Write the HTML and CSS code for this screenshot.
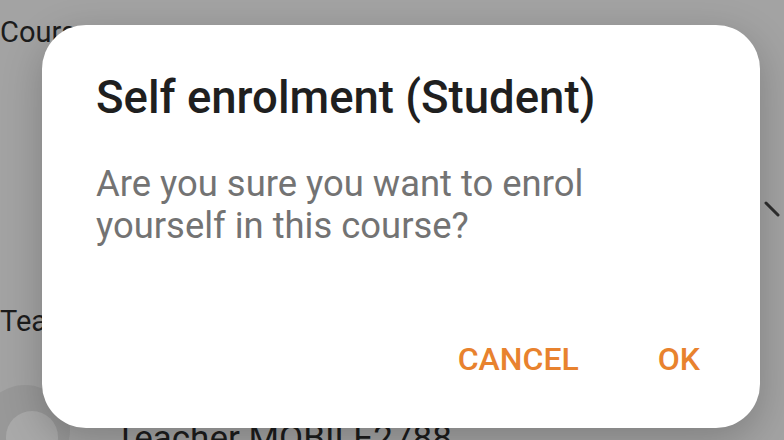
FILE: index.html
```html
<!DOCTYPE html>
<html lang="en">
<head>
    <meta charset="UTF-8">
    <meta name="viewport" content="width=device-width, initial-scale=1.0">
    <title>Self enrolment</title>
    <link rel="stylesheet" href="styles.css">
</head>
<body>
    <div class="page">
        <h2 class="section-title">Course summary</h2>
        <div class="summary-row">
            <svg class="chevron" width="20" height="24" viewBox="0 0 20 24">
                <path d="M2 4 L14 16" stroke="#2e2e2e" stroke-width="3" fill="none" stroke-linecap="round"/>
            </svg>
        </div>
        <h2 class="section-title">Teachers</h2>
        <div class="participant">
            <div class="avatar"><div class="avatar-inner"></div></div>
            <span class="participant-name">Teacher MOBILE2788</span>
        </div>
    </div>

    <div class="dialog">
        <h1 class="dialog-title">Self enrolment (Student)</h1>
        <p class="dialog-text">Are you sure you want to enrol yourself in this course?</p>
        <div class="dialog-actions">
            <button class="dialog-btn">CANCEL</button>
            <button class="dialog-btn">OK</button>
        </div>
    </div>
</body>
</html>
```

FILE: styles.css
```css
html, body {
    margin: 0;
    height: 100%;
    overflow: hidden;
}
body {
    background-color: #a3a3a3;
    font-family: Roboto, "Noto Sans", sans-serif;
    color: #1c1c1c;
}
.page {
    padding-top: 15px;
}
.section-title {
    margin: 0;
    font-size: 29px;
    line-height: 34px;
    font-weight: 400;
}
.summary-row {
    height: 255px;
    padding-top: 150px;
    box-sizing: border-box;
    display: flex;
    justify-content: flex-end;
}
.participant {
    display: flex;
    align-items: flex-start;
    margin-top: 47px;
}
.avatar {
    width: 90px;
    height: 90px;
    border-radius: 50%;
    background-color: #989898;
    margin-left: -20px;
    display: flex;
    align-items: center;
    justify-content: center;
}
.avatar-inner {
    width: 52px;
    height: 52px;
    border-radius: 50%;
    background-color: #a9a9a9;
    margin: 14px 0 0 14px;
}
.participant-name {
    font-size: 35px;
    line-height: 42px;
    padding-top: 33px;
    margin-left: 45px;
}

/* dialog over the page */
.dialog {
    position: absolute;
    left: 42px;
    top: 25px;
    width: 718px;
    height: 403px;
    box-sizing: border-box;
    padding: 47px 60px 49px 54px;
    background-color: #fff;
    border-radius: 44px;
    box-shadow: 0 12px 40px rgba(0, 0, 0, 0.22);
    display: flex;
    flex-direction: column;
}
.dialog-title {
    margin: 0;
    font-size: 45.5px;
    line-height: 52px;
    font-weight: 500;
    color: #1f1f1f;
}
.dialog-text {
    margin: 39px 0 0;
    font-size: 36.4px;
    line-height: 42px;
    color: #737373;
    max-width: 520px;
}
.dialog-actions {
    margin-top: auto;
    display: flex;
    justify-content: flex-end;
    gap: 79px;
}
.dialog-btn {
    background: none;
    border: none;
    padding: 0;
    font-family: Roboto, "Noto Sans", sans-serif;
    font-size: 32px;
    line-height: 40px;
    font-weight: 500;
    color: #e8822e;
}
```
